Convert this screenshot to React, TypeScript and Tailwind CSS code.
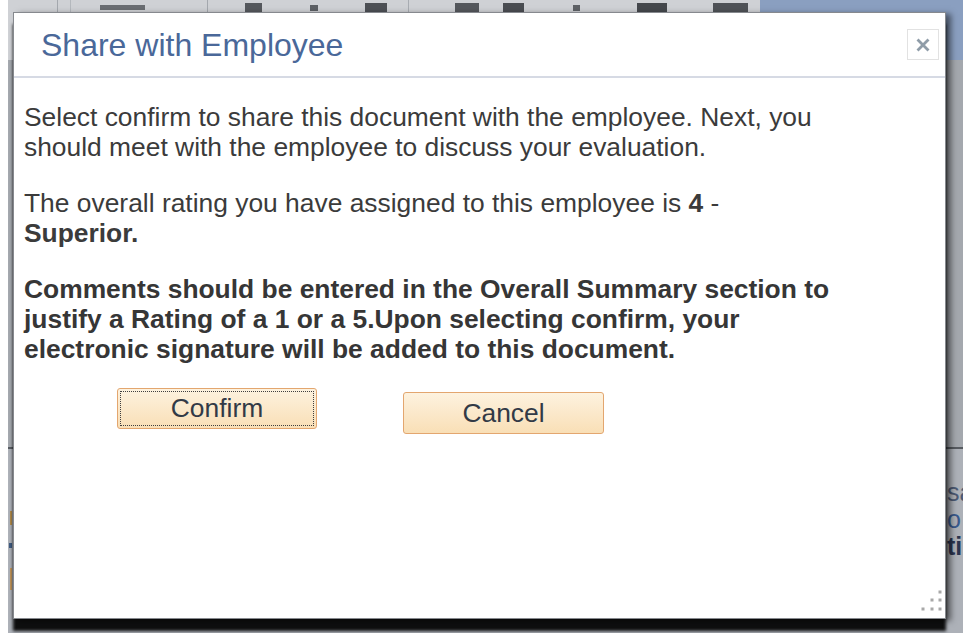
import React from "react";

const FONT = "font-['Liberation_Sans',Arial,sans-serif]";

// toolbar icon bottoms peeking out above the dialog
const TOOLBAR_MARKS: Array<[number, number, number, number, string]> = [
	[49, 0, 1, 13, "#a4a8ae"],
	[62, 0, 1, 13, "#b4b8bd"],
	[92, 5, 45, 5, "#6a6d72"],
	[199, 0, 1, 13, "#a4a8ae"],
	[237, 3, 17, 9, "#55585d"],
	[302, 5, 8, 6, "#5d6065"],
	[357, 3, 22, 9, "#4d5055"],
	[400, 0, 1, 13, "#a8acb2"],
	[447, 3, 24, 9, "#54575c"],
	[495, 3, 21, 9, "#4a4d52"],
	[565, 5, 7, 6, "#5f6267"],
	[629, 3, 30, 9, "#45484d"],
	[705, 3, 35, 9, "#4f5257"],
];

function ToolbarStrip() {
	return (
		<svg width="752" height="60" viewBox="0 0 752 60" aria-hidden>
			<rect width="752" height="60" fill="#cfd1d5" />
			{TOOLBAR_MARKS.map(([x, y, w, h, c], i) => (
				<rect key={i} x={x} y={y} width={w} height={h} fill={c} />
			))}
		</svg>
	);
}

function CloseIcon() {
	return (
		<svg width="14" height="14" viewBox="0 0 14 14" aria-hidden>
			<path
				d="M2.5 2.5l9 9M11.5 2.5l-9 9"
				stroke="#8f9ca8"
				strokeWidth="2.8"
				strokeLinecap="square"
			/>
		</svg>
	);
}

function ResizeGrip() {
	const dots: Array<[number, number]> = [
		[19, 4],
		[11, 12],
		[19, 12],
		[2, 21],
		[11, 21],
		[19, 21],
	];
	return (
		<svg
			className="absolute right-0 bottom-0"
			width="24"
			height="30"
			viewBox="0 0 24 30"
			aria-hidden
		>
			{dots.map(([cx, cy], i) => (
				<rect key={i} x={cx - 1.5} y={cy - 1.5} width="3" height="3" fill="#a8a8a8" />
			))}
		</svg>
	);
}

function PeopleButton({
	label,
	focused,
	className = "",
}: {
	label: string;
	focused?: boolean;
	className?: string;
}) {
	return (
		<button
			type="button"
			className={`rounded-[3px] border border-[#e3a66f] bg-gradient-to-b from-[#fdf2df] to-[#f9dfb6] text-[26.4px] leading-none text-[#323a46] ${
				focused ? "outline-1 outline-dotted outline-[#3f3f3f] outline-offset-[-4px]" : ""
			} ${className}`}
		>
			{label}
		</button>
	);
}

function ShareDialog() {
	return (
		<div className="absolute left-[5px] top-[12px] h-[607px] w-[933px] border border-[#86898e] bg-white shadow-[0_12px_3px_rgba(0,0,0,0.92),5px_2px_6px_rgba(0,0,0,0.5)]">
			<div className="flex h-[65px] items-center justify-between border-b-2 border-[#d6dae4] pl-[27px] pr-[6px]">
				<h1 className="text-[32px] font-normal text-[#4a6899]">Share with Employee</h1>
				<button
					type="button"
					className="flex h-[31px] w-[32px] items-center justify-center border border-[#e2e2e2] bg-white"
				>
					<CloseIcon />
				</button>
			</div>

			<div className="pl-[10px] pt-[24px] text-[26.4px] leading-[30px] text-[#3b3b3b]">
				<p className="mb-[26px] w-[813px]">
					Select confirm to share this document with the employee. Next, you
					should meet with the employee to discuss your evaluation.
				</p>
				<p className="mb-[26px] w-[813px]">
					The overall rating you have assigned to this employee is{" "}
					<strong className="font-bold">4</strong> -{" "}
					<strong className="font-bold">Superior.</strong>
				</p>
				<p className="mb-[24px] w-[813px] font-bold text-[#363636]">
					Comments should be entered in the Overall Summary section to justify a
					Rating of a 1 or a 5.Upon selecting confirm, your electronic signature
					will be added to this document.
				</p>

				<div className="ml-[93px] flex items-start gap-[86px]">
					<PeopleButton label="Confirm" focused className="h-[41px] w-[200px]" />
					<PeopleButton label="Cancel" className="mt-[4px] h-[42px] w-[201px]" />
				</div>
			</div>

			<ResizeGrip />
		</div>
	);
}

export default function App() {
	return (
		<div className={`flex h-[633px] w-[963px] overflow-hidden bg-white ${FONT}`}>
			<div className="w-[8px] shrink-0 bg-white" />

			{/* page behind the modal mask */}
			<div className="relative flex flex-1 flex-col overflow-hidden bg-[#adb1b8]">
				<div className="flex h-[60px]">
					<ToolbarStrip />
					<div className="flex-1 bg-[#8a9fc0]" />
				</div>

				<div className="flex flex-1 flex-col">
					<div className="h-[387px] bg-[#a4a8ae]" />
					<div className="h-[2px] bg-[#575b61]" />
					<div className="flex flex-1 justify-between">
						<div className="flex w-[5px] flex-col">
							<div className="mt-[62px] ml-[2px] h-[14px] w-[2px] bg-[#b08a4a]" />
							<div className="mt-[18px] ml-[1px] h-[5px] w-[3px] bg-[#3e5a80]" />
							<div className="mt-[20px] ml-[2px] h-[22px] w-[2px] bg-[#c0945a]" />
						</div>
						<div className="w-[16px] pt-[30px] text-[25px] leading-[27px]">
							<div className="text-[#4c5a74]">sa</div>
							<div className="text-[#3a5a8c]">o</div>
							<div className="font-bold text-[#2b3550]">ti</div>
						</div>
					</div>
				</div>

				<ShareDialog />
			</div>
		</div>
	);
}
